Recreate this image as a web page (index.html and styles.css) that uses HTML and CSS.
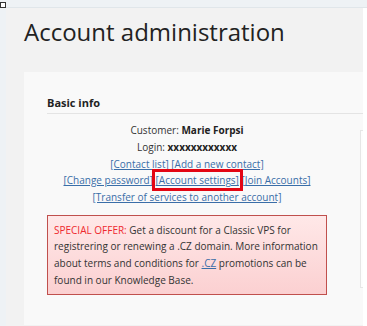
FILE: index.html
```html
<!DOCTYPE html>
<html lang="en">
<head>
<meta charset="utf-8">
<title>Account administration</title>
<link rel="stylesheet" href="styles.css">
</head>
<body>
<div class="topbar"><span class="topicon"></span></div>
<div class="layout">
  <div class="rail"></div>
  <main class="main">
    <h1 class="title">Account administration</h1>
    <section class="card">
      <div class="col">
        <h2 class="heading">Basic info</h2>
        <div class="info">
          <div>Customer: <b>Marie Forpsi</b></div>
          <div>Login: <b>xxxxxxxxxxxx</b></div>
          <div><a href="#">[Contact list]</a> <a href="#">[Add a new contact]</a></div>
          <div><a href="#">[Change password]</a> <span class="mark"><a href="#">[Account settings]</a></span> <a href="#">[Join Accounts]</a></div>
          <div><a href="#">[Transfer of services to another account]</a></div>
        </div>
        <div class="offer">
          <span class="offer-label">SPECIAL OFFER:</span> Get a discount for a Classic VPS for registrering or renewing a .CZ domain. More information about terms and conditions for <a href="#">.CZ</a> promotions can be found in our Knowledge Base.
        </div>
      </div>
      <div class="side"></div>
    </section>
  </main>
</div>
</body>
</html>
```

FILE: styles.css
```css
html, body {
  margin: 0;
  padding: 0;
  background: #ffffff;
  font-family: "Open Sans", "Liberation Sans", sans-serif;
  color: #333333;
}
.topbar {
  height: 7px;
  background: #eef2f5;
  border-bottom: 1px solid #e0e6ea;
  position: relative;
}
.topicon {
  position: absolute;
  left: 0;
  top: 2px;
  width: 4px;
  height: 4px;
  border: 1px solid #333;
  background: #fff;
}
.layout {
  display: flex;
  height: 318px;
  overflow: hidden;
}
.rail {
  width: 6px;
  flex: none;
  background: #eef2f5;
}
.main {
  width: 357px;
  flex: none;
  background: #f2f2f2;
  padding-top: 8px;
  overflow: hidden;
}
.title {
  margin: 0 0 24px 18px;
  font-size: 24px;
  line-height: 32px;
  font-weight: 400;
  color: #222222;
}
.card {
  margin-left: 18px;
  background: #f9f9f9;
  padding: 22px 0 30px 23px;
  display: flex;
  gap: 33px;
  align-items: flex-start;
}
.col {
  width: 280px;
  flex: none;
}
.heading {
  margin: 0 -40px 0 0;
  font-size: 11px;
  line-height: 18px;
  font-weight: 700;
  color: #222;
  padding-bottom: 1px;
  border-bottom: 1px solid #e4e4e4;
}
.info {
  margin-top: 8px;
  text-align: center;
  font-size: 10px;
  line-height: 16.75px;
}
.info b {
  color: #222;
}
a {
  color: #3a6ea8;
  text-decoration: underline;
}
.mark {
  outline: 3px solid #e30613;
  outline-offset: 1px;
}
.offer {
  margin-top: 9px;
  border: 1px solid #c0504d;
  background: linear-gradient(#ffe8e8, #fbd0d1);
  padding: 6px 6px 5px 6px;
  font-size: 10px;
  line-height: 16.7px;
  color: #333;
}
.offer-label {
  color: #ee2a2e;
}
.side {
  width: 40px;
  flex: none;
  height: 156px;
  margin-top: 36px;
  background: #fdfdfd;
  border: 1px solid #e6e6e6;
}
```
